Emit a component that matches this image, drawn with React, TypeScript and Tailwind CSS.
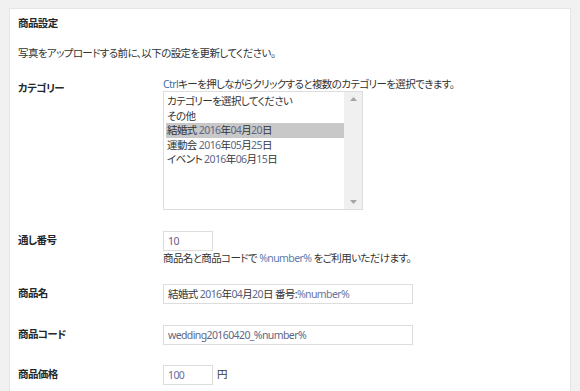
import React from 'react';

const FONT = "[font-family:'Noto_Sans','Noto_Sans_CJK_JP',sans-serif] [font-feature-settings:'palt']";

// latin fragments render in a soft slate tone in the reference
function L({ children, c = 'text-[#5a6788]' }: { children: React.ReactNode; c?: string }) {
    return <span className={c}>{children}</span>;
}

function DateText({ name, m, d }: { name: string; m: string; d: string }) {
    return (
        <>
            {name} <L>2016</L>年<L>{m}</L>月<L>{d}</L>日
        </>
    );
}

const OPTIONS: React.ReactNode[] = [
    'カテゴリーを選択してください',
    'その他',
    <DateText name="結婚式" m="04" d="20" />,
    <DateText name="運動会" m="05" d="25" />,
    <DateText name="イベント" m="06" d="15" />,
];

function Row({
    label,
    children,
    className,
}: {
    label: string;
    children: React.ReactNode;
    className?: string;
}) {
    return (
        <div className={`flex items-center ${className ?? ''}`}>
            <div className="w-[145px] shrink-0 font-bold text-[#23282d]">{label}</div>
            <div className="flex-1">{children}</div>
        </div>
    );
}

function Input({ value, w, tone }: { value: React.ReactNode; w: string; tone?: string }) {
    return (
        <div
            className={`${w} h-[20px] border border-[#dddddd] bg-white pl-[4px] leading-[18px] ${tone ?? 'text-[#333]'}`}
        >
            {value}
        </div>
    );
}

export default function App() {
    return (
        <div
            className={`h-[391px] w-[580px] overflow-hidden bg-[#f1f1f1] pt-[8px] text-[10.5px] tracking-[-0.6px] text-[#333] ${FONT}`}
        >
            <div className="mx-[9px] h-[400px] border border-[#e5e5e5] bg-white px-[8px]">
                <div className="mt-[6px] h-[16px] font-bold leading-[16px] text-[#23282d]">商品設定</div>
                <div className="mt-[14px] h-[16px] leading-[16px]">
                    写真をアップロードする前に、以下の設定を更新してください。
                </div>

                {/* category */}
                <div className="mt-[16px] flex items-start">
                    <div className="mt-[4px] w-[145px] shrink-0 font-bold leading-[14px] text-[#23282d]">
                        カテゴリー
                    </div>
                    <div>
                        <div className="h-[14px] leading-[14px]">
                            <L c="text-[#3f6fa8]">Ctrl</L>キーを押しながらクリックすると複数のカテゴリーを選択できます。
                        </div>
                        <div className="flex h-[119px] w-[200px] border border-[#dddddd] bg-white">
                            <div className="flex-1 pl-[2px] pt-[2px]">
                                {OPTIONS.map((o, i) => (
                                    <div
                                        key={i}
                                        className={`h-[14.5px] pl-[1px] leading-[14.5px] ${i === 2 ? 'bg-[#c8c8c8]' : ''}`}
                                    >
                                        {o}
                                    </div>
                                ))}
                            </div>
                            <div className="flex w-[18px] flex-col items-center justify-between bg-[#f0f0f0] py-[5px]">
                                <svg width="7" height="4" viewBox="0 0 7 4">
                                    <path d="M0 4 L3.5 0 L7 4 Z" fill="#a3a3a3" />
                                </svg>
                                <svg width="7" height="4" viewBox="0 0 7 4">
                                    <path d="M0 0 L3.5 4 L7 0 Z" fill="#a3a3a3" />
                                </svg>
                            </div>
                        </div>
                    </div>
                </div>

                {/* serial */}
                <Row label="通し番号" className="mt-[21px]">
                    <Input value={<L c="text-[#6a5a8a]">10</L>} w="w-[50px]" />
                </Row>
                <div className="ml-[145px] h-[14px] leading-[14px]">
                    商品名と商品コードで <L c="text-[#5f7db0]">%number%</L> をご利用いただけます。
                </div>

                <Row label="商品名" className="mt-[19px]">
                    <Input
                        value={
                            <>
                                <DateText name="結婚式" m="04" d="20" /> 番号:<L c="text-[#6a74a0]">%number%</L>
                            </>
                        }
                        w="w-[250px]"
                    />
                </Row>

                <Row label="商品コード" className="mt-[21px]">
                    <Input value="wedding20160420_%number%" w="w-[250px]" tone="text-[#5e6684]" />
                </Row>

                <Row label="商品価格" className="mt-[20px]">
                    <div className="flex items-center gap-[4px]">
                        <Input value="100" w="w-[50px]" tone="text-[#6d6a94]" />
                        <span>円</span>
                    </div>
                </Row>
            </div>
        </div>
    );
}
